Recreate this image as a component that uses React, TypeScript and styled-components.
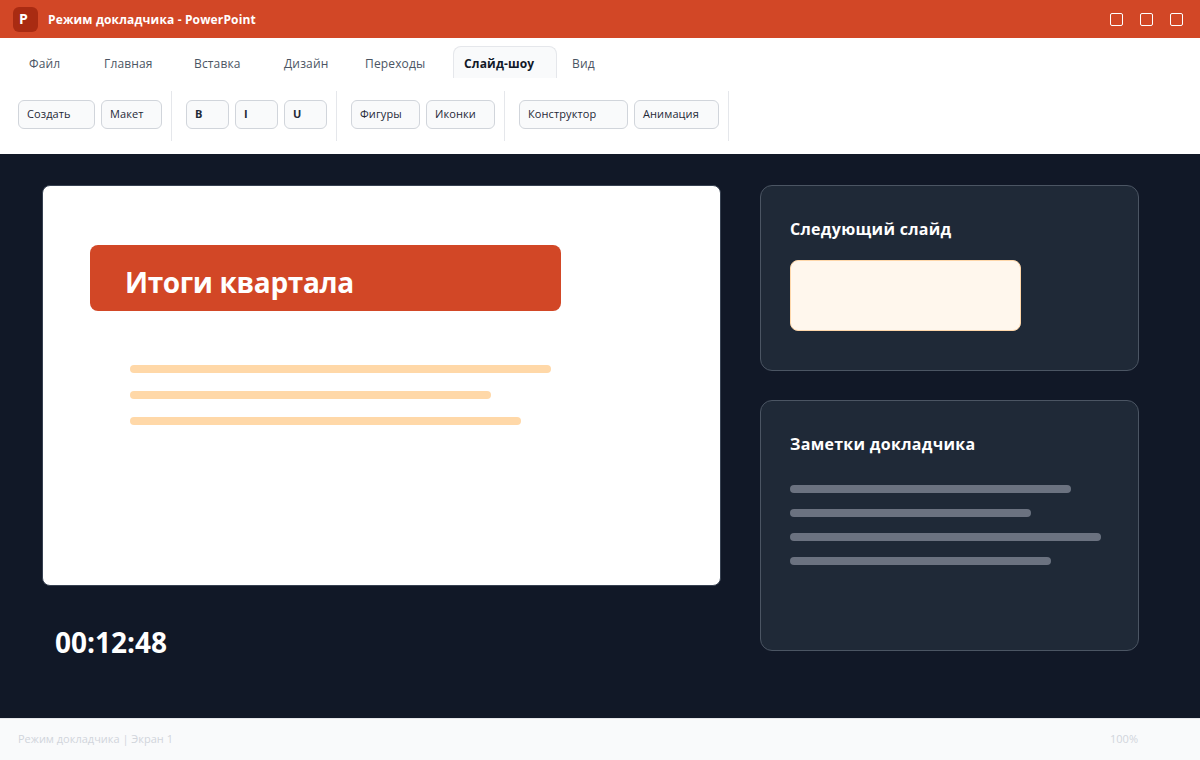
import React from "react";
import styled, { createGlobalStyle } from "styled-components";

const GlobalStyle = createGlobalStyle`
  html, body {
    margin: 0;
    padding: 0;
    background: #111827;
  }
  body {
    font-family: "Open Sans", "Noto Sans", sans-serif;
  }
  * {
    box-sizing: border-box;
  }
`;

const Window = styled.div`
  width: 1200px;
  height: 760px;
  display: flex;
  flex-direction: column;
  overflow: hidden;
`;

const TitleBar = styled.header`
  height: 38px;
  flex: none;
  background: #d24726;
  display: flex;
  align-items: center;
  padding: 0 17px 0 13px;
  color: #fff;
`;

const AppLogo = styled.div`
  width: 25px;
  height: 25px;
  border-radius: 6px;
  background: #a92b12;
  color: #fff;
  font-size: 14px;
  font-weight: 700;
  line-height: 23px;
  padding-left: 6px;
  margin-right: 10px;
`;

const AppTitle = styled.div`
  font-size: 12px;
  font-weight: 700;
  letter-spacing: 0.15px;
  flex: 1;
`;

const WindowControls = styled.div`
  display: flex;
  gap: 17px;
`;

const WindowControl = styled.div`
  width: 13px;
  height: 13px;
  border: 1px solid #fff;
  border-radius: 2px;
`;

const Ribbon = styled.section`
  height: 116px;
  flex: none;
  background: #fff;
`;

const Tabs = styled.nav`
  display: flex;
  gap: 4px;
  padding: 8px 18px 0;
  height: 40px;
`;

const Tab = styled.div<{ $width: number; $active?: boolean }>`
  width: ${(p) => p.$width}px;
  height: 32px;
  padding: 7px 0 0 10px;
  font-size: 12px;
  letter-spacing: 0.15px;
  line-height: 20px;
  font-weight: ${(p) => (p.$active ? 700 : 400)};
  color: ${(p) => (p.$active ? "#111827" : "#4b5563")};
  background: ${(p) => (p.$active ? "#f9fafb" : "transparent")};
  border: 1px solid ${(p) => (p.$active ? "#e5e7eb" : "transparent")};
  border-bottom: none;
  border-radius: 8px 8px 0 0;
`;

const Toolbar = styled.div`
  display: flex;
  padding: 13px 18px 0;
`;

const ToolGroup = styled.div`
  display: flex;
  gap: 6px;
  height: 50px;
  padding: 9px 9px 0 0;
  margin-right: 14px;
  border-right: 1px solid #e5e7eb;
`;

const ToolButton = styled.div<{ $width: number; $bold?: boolean }>`
  width: ${(p) => p.$width}px;
  height: 29px;
  padding-left: 8px;
  font-size: 11px;
  letter-spacing: 0.1px;
  line-height: 26px;
  font-weight: ${(p) => (p.$bold ? 700 : 400)};
  color: #1f2937;
  background: #f9fafb;
  border: 1px solid #d1d5db;
  border-radius: 6px;
`;

const Stage = styled.main`
  flex: 1;
  background: #111827;
  display: flex;
  gap: 39px;
  padding: 31px 0 0 42px;
`;

const SlideColumn = styled.div`
  width: 679px;
  flex: none;
`;

const Slide = styled.div`
  height: 401px;
  background: #fff;
  border: 1px solid #374151;
  border-radius: 8px;
  padding: 59px 0 0 47px;
`;

const SlideHeading = styled.h1`
  width: 471px;
  height: 66px;
  margin: 0;
  padding-left: 35px;
  background: #d24726;
  border-radius: 8px;
  color: #fff;
  font-size: 28px;
  font-weight: 700;
  letter-spacing: -0.35px;
  line-height: 74px;
`;

const SlideLines = styled.div`
  display: flex;
  flex-direction: column;
  gap: 18px;
  padding: 54px 0 0 40px;
`;

const Line = styled.div<{ $width: number; $color: string }>`
  width: ${(p) => p.$width}px;
  height: 8px;
  border-radius: 4px;
  background: ${(p) => p.$color};
`;

const Timer = styled.div`
  padding: 37px 0 0 13px;
  color: #fff;
  font-size: 28px;
  font-weight: 700;
  line-height: 38px;
`;

const SideColumn = styled.aside`
  width: 379px;
  flex: none;
  display: flex;
  flex-direction: column;
  gap: 29px;
`;

const Panel = styled.section<{ $height: number }>`
  height: ${(p) => p.$height}px;
  background: #1f2937;
  border: 1px solid #4b5563;
  border-radius: 12px;
  padding: 29px;
`;

const PanelTitle = styled.h2`
  margin: 0;
  color: #fff;
  font-size: 16px;
  font-weight: 700;
  letter-spacing: 0.3px;
  line-height: 28px;
`;

const NextThumb = styled.div`
  width: 231px;
  height: 71px;
  margin-top: 17px;
  background: #fff7ed;
  border: 1px solid #fed7aa;
  border-radius: 8px;
`;

const NoteLines = styled.div`
  display: flex;
  flex-direction: column;
  gap: 16px;
  margin-top: 27px;
`;

const StatusBar = styled.footer`
  height: 42px;
  flex: none;
  background: #f9fafb;
  border-top: 1px solid #e5e7eb;
  display: flex;
  justify-content: space-between;
  padding: 0 62px 0 18px;
  color: #d1d5db;
  font-size: 11px;
  line-height: 40px;
`;

const tabs = [
  { label: "Файл", width: 71 },
  { label: "Главная", width: 86 },
  { label: "Вставка", width: 86 },
  { label: "Дизайн", width: 77 },
  { label: "Переходы", width: 95 },
  { label: "Слайд-шоу", width: 104, active: true },
  { label: "Вид", width: 60 },
];

const toolGroups = [
  [
    { label: "Создать", width: 77 },
    { label: "Макет", width: 61 },
  ],
  [
    { label: "B", width: 43, bold: true },
    { label: "I", width: 43, bold: true },
    { label: "U", width: 43, bold: true },
  ],
  [
    { label: "Фигуры", width: 69 },
    { label: "Иконки", width: 69 },
  ],
  [
    { label: "Конструктор", width: 109 },
    { label: "Анимация", width: 85 },
  ],
];

const slideLines = [421, 361, 391];
const noteLines = [281, 241, 311, 261];

export default function App() {
  return (
    <Window>
      <GlobalStyle />
      <TitleBar>
        <AppLogo>P</AppLogo>
        <AppTitle>Режим докладчика - PowerPoint</AppTitle>
        <WindowControls>
          <WindowControl />
          <WindowControl />
          <WindowControl />
        </WindowControls>
      </TitleBar>
      <Ribbon>
        <Tabs>
          {tabs.map((tab) => (
            <Tab key={tab.label} $width={tab.width} $active={tab.active}>
              {tab.label}
            </Tab>
          ))}
        </Tabs>
        <Toolbar>
          {toolGroups.map((group, i) => (
            <ToolGroup key={i}>
              {group.map((tool) => (
                <ToolButton key={tool.label} $width={tool.width} $bold={"bold" in tool}>
                  {tool.label}
                </ToolButton>
              ))}
            </ToolGroup>
          ))}
        </Toolbar>
      </Ribbon>
      <Stage>
        <SlideColumn>
          <Slide>
            <SlideHeading>Итоги квартала</SlideHeading>
            <SlideLines>
              {slideLines.map((w) => (
                <Line key={w} $width={w} $color="#ffd8a8" />
              ))}
            </SlideLines>
          </Slide>
          <Timer>00:12:48</Timer>
        </SlideColumn>
        <SideColumn>
          <Panel $height={186}>
            <PanelTitle>Следующий слайд</PanelTitle>
            <NextThumb />
          </Panel>
          <Panel $height={251}>
            <PanelTitle>Заметки докладчика</PanelTitle>
            <NoteLines>
              {noteLines.map((w) => (
                <Line key={w} $width={w} $color="#6b7280" />
              ))}
            </NoteLines>
          </Panel>
        </SideColumn>
      </Stage>
      <StatusBar>
        <span>Режим докладчика | Экран 1</span>
        <span>100%</span>
      </StatusBar>
    </Window>
  );
}
